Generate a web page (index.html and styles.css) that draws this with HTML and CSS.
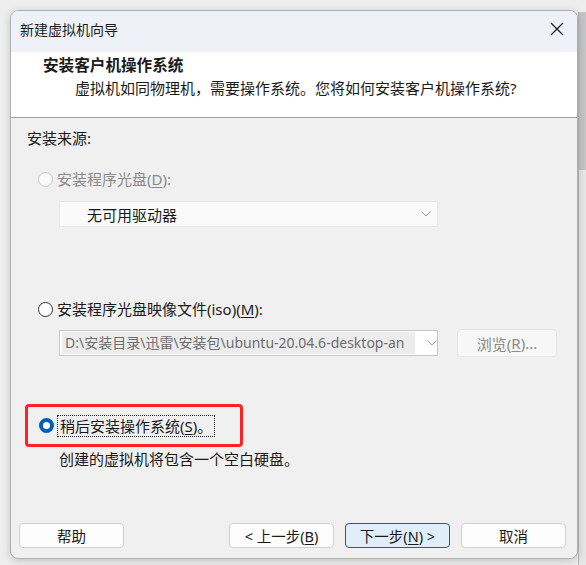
FILE: index.html
```html
<!DOCTYPE html>
<html lang="zh-CN">
<head>
<meta charset="utf-8">
<title>新建虚拟机向导</title>
<link rel="stylesheet" href="styles.css">
</head>
<body>
<div class="desktop">
  <div class="bg-scroll"><div class="bg-thumb"></div></div>
  <div class="window">
    <div class="titlebar">
      <span class="title">新建虚拟机向导</span>
      <svg class="close" width="14" height="14" viewBox="0 0 14 14"><path d="M1 1L13 13M13 1L1 13" stroke="#1a1a1a" stroke-width="1.2" fill="none"/></svg>
    </div>
    <div class="header">
      <div class="h-title">安装客户机操作系统</div>
      <div class="h-sub">虚拟机如同物理机，需要操作系统。您将如何安装客户机操作系统?</div>
    </div>
    <div class="body">
      <div class="label">安装来源:</div>
      <div class="radio-row disabled r1">
        <span class="radio"></span>
        <span>安装程序光盘(<u>D</u>):</span>
      </div>
      <div class="combo combo1">
        <span class="combo-text">无可用驱动器</span>
        <svg class="chev" width="10" height="6" viewBox="0 0 10 6"><path d="M0.5 0.5L5 5L9.5 0.5" stroke="#9a9a9a" fill="none"/></svg>
      </div>
      <div class="radio-row r2">
        <span class="radio"></span>
        <span>安装程序光盘映像文件(iso)(<u>M</u>):</span>
      </div>
      <div class="iso-row">
        <div class="combo combo2">
          <span class="path">D:\安装目录\迅雷\安装包\ubuntu-20.04.6-desktop-an</span>
          <svg class="chev" width="10" height="6" viewBox="0 0 10 6"><path d="M0.5 0.5L5 5L9.5 0.5" stroke="#9a9a9a" fill="none"/></svg>
        </div>
        <div class="browse">浏览(<u>R</u>)...</div>
      </div>
      <div class="highlight">
        <div class="radio-row r3">
          <span class="radio checked"></span>
          <span class="focus">稍后安装操作系统(<u>S</u>)。</span>
        </div>
      </div>
      <div class="desc">创建的虚拟机将包含一个空白硬盘。</div>
    </div>
    <div class="buttons">
      <div class="btn">帮助</div>
      <div class="spacer"></div>
      <div class="btn">&lt; 上一步(<u>B</u>)</div>
      <div class="btn primary">下一步(<u>N</u>) &gt;</div>
      <div class="btn">取消</div>
    </div>
  </div>
</div>
</body>
</html>
```

FILE: styles.css
```css
html, body {
  margin: 0;
  padding: 0;
}
body {
  width: 586px;
  height: 565px;
  overflow: hidden;
  background: #eeeeee;
  font-family: "Noto Sans", "Noto Sans CJK SC", sans-serif;
  font-size: 15px;
  color: #1a1a1a;
}
.desktop {
  position: relative;
  padding: 10px 0 0 10px;
  height: 565px;
  box-sizing: border-box;
}
.bg-scroll {
  position: absolute;
  left: 578px;
  top: 12px;
  width: 8px;
  bottom: 0;
  background: #e6e6e6;
  border-left: 1px solid #b8b8b8;
}
.bg-thumb {
  height: 158px;
  background: #c4c4c4;
}
.window {
  position: relative;
  width: 568px;
  height: 549px;
  box-sizing: border-box;
  border: 1px solid #b0b0b0;
  border-radius: 8px;
  background: #f0f0f0;
  box-shadow: 0 2px 8px rgba(0,0,0,0.18);
  overflow: hidden;
  display: flex;
  flex-direction: column;
}
.titlebar {
  height: 41px;
  box-sizing: border-box;
  background: #eef2f8;
  display: flex;
  align-items: center;
  padding: 0 13px 6px 9px;
  font-size: 14px;
}
.title {
  flex: 1;
}
.close {
  display: block;
}
.header {
  height: 66px;
  background: #ffffff;
  border-bottom: 1px solid #a0a0a0;
  padding: 3px 0 0 32px;
  box-sizing: border-box;
}
.h-title {
  font-weight: bold;
  line-height: 20px;
  font-size: 15.6px;
}
.h-sub {
  margin-top: 3px;
  padding-left: 32px;
  line-height: 20px;
}
.body {
  padding: 10px 0 0 16px;
}
.label {
  line-height: 20px;
}
.radio-row {
  display: flex;
  align-items: center;
  line-height: 20px;
  margin-left: 11px;
  gap: 4px;
}
.radio {
  width: 15px;
  height: 15px;
  box-sizing: border-box;
  border-radius: 50%;
  border: 1px solid #333333;
  background: #ffffff;
  flex: none;
}
.disabled {
  color: #8a8a8a;
}
.disabled .radio {
  border-color: #c8c8c8;
  background: #fbfbfb;
}
.radio.checked {
  border: 4.5px solid #005fb8;
  background: #ffffff;
}
.r1 {
  margin-top: 21px;
}
.combo {
  width: 379px;
  height: 26px;
  box-sizing: border-box;
  display: flex;
  align-items: center;
  margin-left: 32px;
}
.combo1 {
  margin-top: 12px;
  background: #fafafa;
  border: 1px solid #e8e8e8;
  padding-left: 27px;
}
.combo-text {
  flex: 1;
}
.chev {
  margin-right: 6px;
  flex: none;
}
.r2 {
  margin-top: 72px;
}
.iso-row {
  margin-top: 10px;
  display: flex;
  align-items: center;
  gap: 19px;
}
.combo2 {
  background: #ffffff;
  border: 1px solid #c6c6c6;
  padding-left: 2px;
  gap: 12px;
}
.path {
  width: 354px;
  white-space: nowrap;
  background: #ececec;
  color: #6d6d6d;
  padding-left: 3px;
  box-sizing: border-box;
  line-height: 22px;
  font-size: 14px;
}
.combo2 .chev {
  margin-right: 0;
}
.browse {
  width: 100px;
  height: 28px;
  box-sizing: border-box;
  background: #f7f7f7;
  border: 1px solid #e6e6e6;
  border-radius: 4px;
  color: #8a8a8a;
  display: flex;
  align-items: center;
  justify-content: center;
}
.highlight {
  margin-top: 47px;
  margin-left: -2px;
  width: 218px;
  height: 43px;
  box-sizing: border-box;
  border: 3px solid #ff2222;
  border-radius: 4px;
  display: flex;
  align-items: center;
}
.r3 {
  margin-left: 11px;
  gap: 4px;
}
.focus {
  outline: 1px dotted #222;
  outline-offset: 0;
  padding: 0 2px;
  line-height: 20px;
}
.desc {
  margin-left: 32px;
  line-height: 20px;
  margin-top: 2px;
}
.buttons {
  margin-top: auto;
  display: flex;
  padding: 0 11px 10px 8px;
  gap: 11px;
}
.spacer {
  flex: 1;
}
.btn {
  width: 105px;
  height: 25px;
  box-sizing: border-box;
  background: #fdfdfd;
  border: 1px solid #d0d0d0;
  border-radius: 4px;
  display: flex;
  align-items: center;
  justify-content: center;
  font-size: 14.5px;
}
.btn.primary {
  background: #e0eef9;
  border-color: #0067c0;
}
u {
  text-decoration: underline;
  text-underline-offset: 2px;
}
```
